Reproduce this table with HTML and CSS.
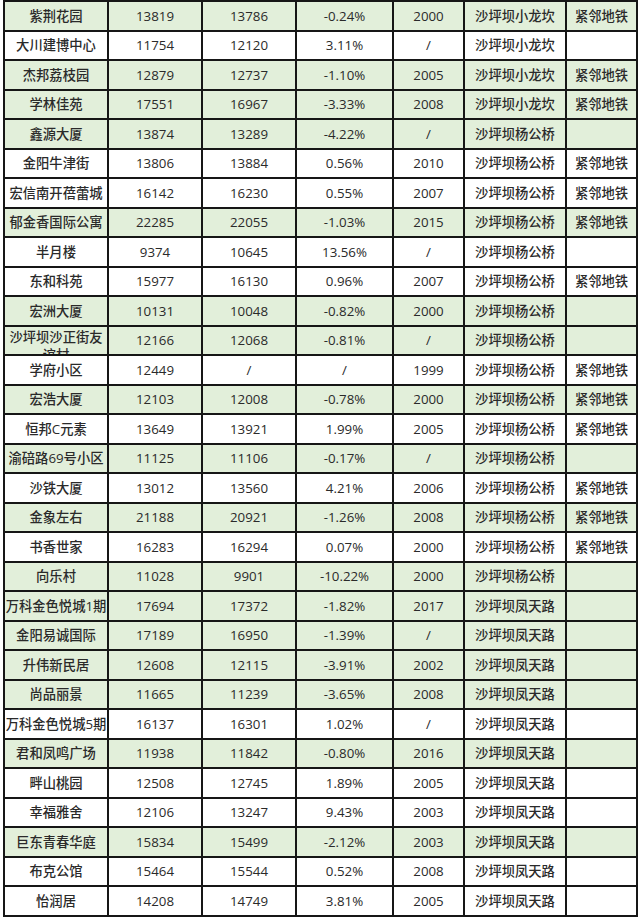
FILE: index.html
```html
<!DOCTYPE html>
<html lang="zh-CN">
<head>
<meta charset="utf-8">
<title>沙坪坝小区房价</title>
<link rel="stylesheet" href="styles.css">
</head>
<body>
<table class="price-table">
<colgroup>
<col class="c-name"><col class="c-num"><col class="c-num"><col class="c-pct"><col class="c-year"><col class="c-area"><col class="c-metro">
</colgroup>
<tbody>
<tr class="g"><td>紫荆花园</td><td>13819</td><td>13786</td><td>-0.24%</td><td>2000</td><td>沙坪坝小龙坎</td><td>紧邻地铁</td></tr>
<tr><td>大川建博中心</td><td>11754</td><td>12120</td><td>3.11%</td><td>/</td><td>沙坪坝小龙坎</td><td></td></tr>
<tr class="g"><td>杰邦荔枝园</td><td>12879</td><td>12737</td><td>-1.10%</td><td>2005</td><td>沙坪坝小龙坎</td><td>紧邻地铁</td></tr>
<tr class="g"><td>学林佳苑</td><td>17551</td><td>16967</td><td>-3.33%</td><td>2008</td><td>沙坪坝小龙坎</td><td>紧邻地铁</td></tr>
<tr class="g"><td>鑫源大厦</td><td>13874</td><td>13289</td><td>-4.22%</td><td>/</td><td>沙坪坝杨公桥</td><td></td></tr>
<tr><td>金阳牛津街</td><td>13806</td><td>13884</td><td>0.56%</td><td>2010</td><td>沙坪坝杨公桥</td><td>紧邻地铁</td></tr>
<tr><td>宏信南开蓓蕾城</td><td>16142</td><td>16230</td><td>0.55%</td><td>2007</td><td>沙坪坝杨公桥</td><td>紧邻地铁</td></tr>
<tr class="g"><td>郁金香国际公寓</td><td>22285</td><td>22055</td><td>-1.03%</td><td>2015</td><td>沙坪坝杨公桥</td><td>紧邻地铁</td></tr>
<tr><td>半月楼</td><td>9374</td><td>10645</td><td>13.56%</td><td>/</td><td>沙坪坝杨公桥</td><td></td></tr>
<tr><td>东和科苑</td><td>15977</td><td>16130</td><td>0.96%</td><td>2007</td><td>沙坪坝杨公桥</td><td>紧邻地铁</td></tr>
<tr class="g"><td>宏洲大厦</td><td>10131</td><td>10048</td><td>-0.82%</td><td>2000</td><td>沙坪坝杨公桥</td><td></td></tr>
<tr class="g"><td class="wrap"><div class="clip">沙坪坝沙正街友谊村</div></td><td>12166</td><td>12068</td><td>-0.81%</td><td>/</td><td>沙坪坝杨公桥</td><td></td></tr>
<tr><td>学府小区</td><td>12449</td><td>/</td><td>/</td><td>1999</td><td>沙坪坝杨公桥</td><td>紧邻地铁</td></tr>
<tr class="g"><td>宏浩大厦</td><td>12103</td><td>12008</td><td>-0.78%</td><td>2000</td><td>沙坪坝杨公桥</td><td>紧邻地铁</td></tr>
<tr><td>恒邦C元素</td><td>13649</td><td>13921</td><td>1.99%</td><td>2005</td><td>沙坪坝杨公桥</td><td>紧邻地铁</td></tr>
<tr class="g"><td>渝碚路69号小区</td><td>11125</td><td>11106</td><td>-0.17%</td><td>/</td><td>沙坪坝杨公桥</td><td></td></tr>
<tr><td>沙铁大厦</td><td>13012</td><td>13560</td><td>4.21%</td><td>2006</td><td>沙坪坝杨公桥</td><td>紧邻地铁</td></tr>
<tr class="g"><td>金象左右</td><td>21188</td><td>20921</td><td>-1.26%</td><td>2008</td><td>沙坪坝杨公桥</td><td>紧邻地铁</td></tr>
<tr><td>书香世家</td><td>16283</td><td>16294</td><td>0.07%</td><td>2000</td><td>沙坪坝杨公桥</td><td>紧邻地铁</td></tr>
<tr class="g"><td>向乐村</td><td>11028</td><td>9901</td><td>-10.22%</td><td>2000</td><td>沙坪坝杨公桥</td><td></td></tr>
<tr class="g"><td>万科金色悦城1期</td><td>17694</td><td>17372</td><td>-1.82%</td><td>2017</td><td>沙坪坝凤天路</td><td></td></tr>
<tr class="g"><td>金阳易诚国际</td><td>17189</td><td>16950</td><td>-1.39%</td><td>/</td><td>沙坪坝凤天路</td><td></td></tr>
<tr class="g"><td>升伟新民居</td><td>12608</td><td>12115</td><td>-3.91%</td><td>2002</td><td>沙坪坝凤天路</td><td></td></tr>
<tr class="g"><td>尚品丽景</td><td>11665</td><td>11239</td><td>-3.65%</td><td>2008</td><td>沙坪坝凤天路</td><td></td></tr>
<tr><td>万科金色悦城5期</td><td>16137</td><td>16301</td><td>1.02%</td><td>/</td><td>沙坪坝凤天路</td><td></td></tr>
<tr class="g"><td>君和凤鸣广场</td><td>11938</td><td>11842</td><td>-0.80%</td><td>2016</td><td>沙坪坝凤天路</td><td></td></tr>
<tr><td>畔山桃园</td><td>12508</td><td>12745</td><td>1.89%</td><td>2005</td><td>沙坪坝凤天路</td><td></td></tr>
<tr><td>幸福雅舍</td><td>12106</td><td>13247</td><td>9.43%</td><td>2003</td><td>沙坪坝凤天路</td><td></td></tr>
<tr class="g"><td>巨东青春华庭</td><td>15834</td><td>15499</td><td>-2.12%</td><td>2003</td><td>沙坪坝凤天路</td><td></td></tr>
<tr><td>布克公馆</td><td>15464</td><td>15544</td><td>0.52%</td><td>2008</td><td>沙坪坝凤天路</td><td></td></tr>
<tr><td>怡润居</td><td>14208</td><td>14749</td><td>3.81%</td><td>2005</td><td>沙坪坝凤天路</td><td></td></tr>
</tbody>
</table>
</body>
</html>
```

FILE: styles.css
```css
html, body {
  margin: 0;
  padding: 0;
  background: #ffffff;
}

body {
  padding: 0 0 0 3px;
  font-family: "Open Sans", "Noto Sans CJK SC", sans-serif;
  font-size: 13.3px;
  font-weight: 500;
  color: #2a2a2a;
}

.price-table {
  border-collapse: collapse;
  table-layout: fixed;
  width: 633px;
  border: 2px solid #161616;
}

.c-name { width: 104px; }
.c-num { width: 94px; }
.c-pct { width: 97px; }
.c-year { width: 71px; }
.c-area { width: 102px; }
.c-metro { width: 71px; }

.price-table tr {
  height: 29.5px;
}

.price-table td {
  border: 2px solid #161616;
  padding: 0;
  text-align: center;
  vertical-align: middle;
  white-space: nowrap;
  line-height: 18px;
  overflow: hidden;
}

.price-table tr.g td {
  background: #e2efda;
}

.price-table td.wrap {
  white-space: normal;
  vertical-align: top;
}

.clip {
  height: 26px;
  padding-top: 1px;
  overflow: hidden;
  line-height: 18px;
}
```
